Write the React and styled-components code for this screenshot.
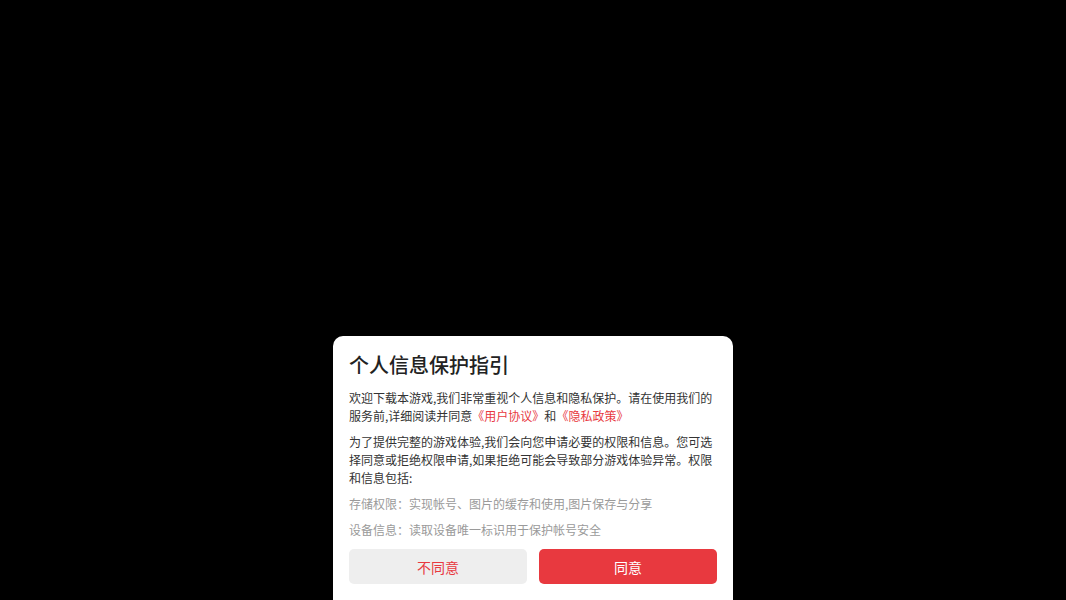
import React from 'react'
import styled, { createGlobalStyle } from 'styled-components'

const GlobalStyle = createGlobalStyle`
    html, body {
        margin: 0;
        padding: 0;
        background: #000;
    }
    body {
        font-family: 'Noto Sans CJK SC', 'Noto Sans', sans-serif;
    }
`;

const permissions = [
    { id: 1, label: '存储权限', text: '实现帐号、图片的缓存和使用,图片保存与分享' },
    { id: 2, label: '设备信息', text: '读取设备唯一标识用于保护帐号安全' },
]

function App() {
    return (
        <>
            <GlobalStyle />
            <Screen>
                <Dialog>
                    <Title>个人信息保护指引</Title>
                    <Paragraph>
                        欢迎下载本游戏,我们非常重视个人信息和隐私保护。请在使用我们的服务前,详细阅读并同意
                        <Link>《用户协议》</Link>和<Link>《隐私政策》</Link>
                    </Paragraph>
                    <Paragraph>
                        为了提供完整的游戏体验,我们会向您申请必要的权限和信息。您可选择同意或拒绝权限申请,如果拒绝可能会导致部分游戏体验异常。权限和信息包括:
                    </Paragraph>
                    {permissions.map((item) => (
                        <Paragraph key={item.id} $muted>
                            {item.label}：{item.text}
                        </Paragraph>
                    ))}
                    <Actions>
                        <Button>不同意</Button>
                        <Button $primary>同意</Button>
                    </Actions>
                </Dialog>
            </Screen>
        </>
    )
}

const Screen = styled.div`
    width: 100%;
    height: 100vh;
    display: flex;
    justify-content: center;
    align-items: flex-end;
    overflow: hidden;
    background: #000;
`;

const Dialog = styled.div`
    width: 400px;
    box-sizing: border-box;
    background: #fff;
    border-radius: 10px 10px 0 0;
    padding: 15px 16px 16px;
    display: flex;
    flex-direction: column;
`;

const Title = styled.h2`
    margin: 0 0 10px;
    font-size: 20px;
    line-height: 28px;
    font-weight: 500;
    color: #222;
`;

const Paragraph = styled.p`
    margin: 0 0 8px;
    font-size: 12px;
    line-height: 18px;
    color: ${(p) => (p.$muted ? '#9a9a9a' : '#333')};
`;

const Link = styled.span`
    color: #e8393f;
`;

const Actions = styled.div`
    display: flex;
    gap: 12px;
    margin-top: 2px;
`;

const Button = styled.button`
    flex: 1;
    height: 35px;
    border: none;
    border-radius: 5px;
    font-family: inherit;
    font-size: 14px;
    background: ${(p) => (p.$primary ? '#e8393f' : '#eeeeee')};
    color: ${(p) => (p.$primary ? '#fff' : '#e8393f')};
    cursor: pointer;
`;

export default App;
